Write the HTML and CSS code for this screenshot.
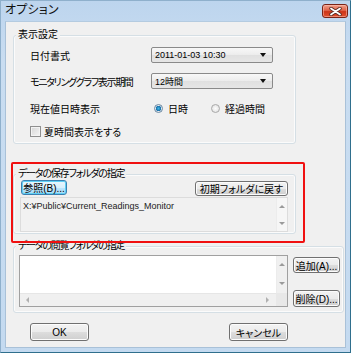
FILE: index.html
```html
<!DOCTYPE html>
<html lang="ja">
<head>
  <meta charset="UTF-8" />
  <title>オプション</title>
  <link rel="stylesheet" href="styles.css">
</head>
<body>

  <div class="window">
    <!-- Title bar -->
    <div class="titlebar">
      <span class="title">オプション</span>
      <span class="close-btn">
        <svg width="13" height="9" viewBox="0 0 13 9">
          <path d="M2 1.5 L11 7.5 M11 1.5 L2 7.5" stroke="#5a2a22" stroke-width="3.4" stroke-linecap="round"/>
          <path d="M2 1.5 L11 7.5 M11 1.5 L2 7.5" stroke="#fff" stroke-width="1.8" stroke-linecap="round"/>
        </svg>
      </span>
    </div>

    <div class="client">
      <!-- 表示設定 -->
      <div class="group display-group">
        <span class="group-title">表示設定</span>
        <div class="row">
          <span class="row-label">日付書式</span>
          <div class="combo"><span>2011-01-03 10:30</span><i class="combo-arrow"></i></div>
        </div>
        <div class="row row-2">
          <span class="row-label kana">モニタリンググラフ表示期間</span>
          <div class="combo"><span>12時間</span><i class="combo-arrow"></i></div>
        </div>
        <div class="row row-3">
          <span class="row-label">現在値日時表示</span>
          <label class="radio-option first"><i class="radio checked"></i>日時</label>
          <label class="radio-option"><i class="radio"></i>経過時間</label>
        </div>
        <div class="row row-4">
          <label class="check-option"><i class="checkbox"></i>夏時間表示をする</label>
        </div>
      </div>

      <!-- データの保存フォルダの指定 -->
      <div class="group save-group">
        <span class="group-title kana">データの保存フォルダの指定</span>
        <div class="save-buttons">
          <button class="btn focused">参照(B)...</button>
          <button class="btn reset-btn">初期フォルダに戻す</button>
        </div>
        <div class="path-box">
          <span class="path-text">X:¥Public¥Current_Readings_Monitor</span>
          <div class="vscroll">
            <i class="arrow up"></i>
            <i class="arrow down"></i>
          </div>
        </div>
      </div>

      <!-- データの閲覧フォルダの指定 -->
      <div class="group view-group">
        <span class="group-title kana">データの閲覧フォルダの指定</span>
        <div class="list-box">
          <div class="list-main">
            <div class="list-area"></div>
            <div class="vscroll">
              <i class="arrow up"></i>
              <i class="arrow down"></i>
            </div>
          </div>
          <div class="hscroll-row">
            <div class="hscroll">
              <i class="arrow left"></i>
              <i class="arrow right"></i>
            </div>
            <div class="corner"></div>
          </div>
        </div>
        <div class="side-buttons">
          <button class="btn side-btn">追加(A)...</button>
          <button class="btn side-btn">削除(D)...</button>
        </div>
      </div>

      <!-- OK / Cancel -->
      <div class="dialog-buttons">
        <button class="btn dialog-btn">OK</button>
        <button class="btn dialog-btn">キャンセル</button>
      </div>

      <!-- red highlight annotation -->
      <div class="highlight"></div>
    </div>
  </div>

</body>
</html>
```

FILE: styles.css
```css
* { margin: 0; padding: 0; box-sizing: border-box; }

body {
  background: #fff;
  font-family: "Liberation Sans", "Noto Sans CJK JP", sans-serif;
  font-size: 10px;
  font-feature-settings: "palt";
  color: #000;
}

.window {
  width: 351px;
  height: 353px;
  background: linear-gradient(#bdd5ee, #c9ddf1 60px, #c4daf0);
  border: 1px solid #8fb0cc;
  border-right-color: #2f6f8d;
  border-bottom-color: #2f6f8d;
  display: flex;
  flex-direction: column;
}

/* --- TITLE BAR --- */
.titlebar {
  height: 20px;
  display: flex;
  justify-content: space-between;
  align-items: flex-start;
  padding-left: 4px;
}

.title {
  font-size: 12px;
  line-height: 18px;
  color: #111;
  letter-spacing: 0.2px;
}

.close-btn {
  width: 26px;
  height: 14px;
  margin-top: 3px;
  margin-right: 2px;
  border: 1px solid #7a2418;
  border-radius: 3px;
  background: linear-gradient(#f0a08c, #e0644a 45%, #cc3519 55%, #e2502e);
  box-shadow: inset 0 0 0 1px rgba(255,200,185,0.5);
  display: flex;
  align-items: center;
  justify-content: center;
}

/* --- CLIENT AREA --- */
.client {
  position: relative;
  flex: 1;
  margin: 0 4px 4px 4px;
  background: #f0f0f0;
  border: 1px solid #a9c1d8;
  border-top-color: #b4cbe0;
}

.group {
  position: relative;
  margin-left: 7px;
  border: 1px solid #d5dfe5;
  border-radius: 3px;
  box-shadow: inset 0 0 0 1px #fbfbfb;
}

.group-title {
  position: absolute;
  top: -7px;
  left: 2px;
  padding: 0 2px;
  background: #f0f0f0;
  line-height: 12px;
  font-size: 10px;
  white-space: nowrap;
}

.kana {
  letter-spacing: -1.2px;
}

/* 表示設定 */
.display-group {
  margin-top: 13px;
  width: 283px;
  height: 109px;
  padding: 11px 0 0 16px;
}

.row {
  display: flex;
  align-items: center;
  height: 16px;
}

.row-2 { margin-top: 10px; }
.row-3 { margin-top: 11px; }
.row-4 { margin-top: 7px; }

.row-label {
  width: 121px;
  flex-shrink: 0;
  font-size: 10px;
  white-space: nowrap;
}

.row-label.kana {
  letter-spacing: -1.3px;
}

.combo {
  width: 122px;
  height: 16px;
  border: 1px solid #8a8a8a;
  border-radius: 2px;
  background: linear-gradient(#f8f8f8, #ececec 50%, #e0e0e0 51%, #e6e6e6);
  display: flex;
  align-items: center;
  justify-content: space-between;
  padding: 0 6px 0 3px;
  font-size: 9px;
}

.combo-arrow {
  width: 0;
  height: 0;
  border-left: 3.5px solid transparent;
  border-right: 3.5px solid transparent;
  border-top: 4px solid #111;
}

.radio-option {
  display: flex;
  align-items: center;
  gap: 5px;
  font-size: 10px;
  white-space: nowrap;
}

.radio-option.first {
  margin-left: 3px;
  width: 57px;
}

.radio {
  width: 9px;
  height: 9px;
  border-radius: 50%;
  border: 1px solid #a9a9a9;
  background: radial-gradient(#fdfdfd, #dcdcdc);
}

.radio.checked {
  border-color: #6d8aa3;
  background: radial-gradient(circle, #3ab7e8 0, #1a6ea8 2.5px, #e3eaf0 3px, #c9d3dc);
}

.check-option {
  display: flex;
  align-items: center;
  gap: 3px;
  font-size: 10px;
  white-space: nowrap;
}

.checkbox {
  width: 11px;
  height: 11px;
  border: 1px solid #8f8f8f;
  background: linear-gradient(135deg, #d6d6d6, #f5f5f5);
  box-shadow: inset 0 0 0 1px #f3f3f3;
}

/* --- BUTTONS --- */
.btn {
  font-family: "Liberation Sans", "Noto Sans CJK JP", sans-serif;
  font-size: 10px;
  font-feature-settings: "palt";
  color: #000;
  white-space: nowrap;
  border: 1px solid #707070;
  border-radius: 3px;
  background: linear-gradient(#f3f3f3, #ebebeb 50%, #dddddd 51%, #cfcfcf);
  box-shadow: inset 0 0 0 1px #fcfcfc;
  display: flex;
  align-items: center;
  justify-content: center;
  cursor: pointer;
}

.btn.focused {
  border-color: #3c7fb1;
  box-shadow: inset 0 0 0 1px #5fd0f5;
  background: linear-gradient(#eaf6fd, #d9f0fc 50%, #bee6fd 51%, #a7d9f5);
}

/* データの保存フォルダの指定 */
.save-group {
  margin-top: 30px;
  width: 283px;
  height: 60px;
  padding: 5px 7px 0 6px;
}

.save-buttons {
  display: flex;
  justify-content: space-between;
  align-items: flex-start;
  height: 17px;
}

.save-buttons .btn {
  height: 15px;
}

.save-buttons .focused {
  width: 46px;
  margin-left: 1px;
}

.reset-btn {
  width: 93px;
  margin-top: 1px;
}

.path-box {
  height: 35px;
  border: 1px solid #dcdcdc;
  background: #f1f1f1;
  display: flex;
  justify-content: space-between;
}

.path-text {
  font-size: 9px;
  padding: 3px 0 0 2px;
  color: #222;
}

.vscroll {
  width: 11px;
  background: #f6f6f6;
  border-left: 1px solid #ececec;
  display: flex;
  flex-direction: column;
  justify-content: space-between;
  align-items: center;
  padding: 7px 0 6px;
}

.arrow {
  width: 0;
  height: 0;
}

.arrow.up {
  border-left: 3px solid transparent;
  border-right: 3px solid transparent;
  border-bottom: 3px solid #9a9a9a;
}

.arrow.down {
  border-left: 3px solid transparent;
  border-right: 3px solid transparent;
  border-top: 3px solid #9a9a9a;
}

.arrow.left {
  border-top: 3px solid transparent;
  border-bottom: 3px solid transparent;
  border-right: 3px solid #b0b0b0;
}

.arrow.right {
  border-top: 3px solid transparent;
  border-bottom: 3px solid transparent;
  border-left: 3px solid #b0b0b0;
}

/* データの閲覧フォルダの指定 */
.view-group {
  margin-top: 12px;
  width: 331px;
  height: 67px;
  padding: 8px 0 0 5px;
  display: flex;
  gap: 5px;
}

.list-box {
  width: 269px;
  height: 52px;
  border: 1px solid #a0a0a0;
  background: #fff;
  display: flex;
  flex-direction: column;
}

.list-main {
  flex: 1;
  display: flex;
}

.list-area {
  flex: 1;
}

.list-main .vscroll {
  background: #f0f0f0;
  padding: 7px 0 8px;
}

.hscroll-row {
  height: 13px;
  display: flex;
}

.hscroll {
  flex: 1;
  background: #f0f0f0;
  border-top: 1px solid #e6e6e6;
  display: flex;
  align-items: center;
  justify-content: space-between;
  padding: 0 7px 0 6px;
}

.corner {
  width: 11px;
  background: #e8e8e8;
}

.side-buttons {
  display: flex;
  flex-direction: column;
  justify-content: space-between;
  padding-top: 2px;
  height: 52px;
}

.side-btn {
  width: 47px;
  height: 16px;
}

.side-btn:last-child {
  height: 17px;
}

/* OK / Cancel */
.dialog-buttons {
  display: flex;
  gap: 140px;
  margin-top: 10px;
  padding-left: 24px;
}

.dialog-btn {
  width: 59px;
  height: 18px;
}

/* red highlight annotation */
.highlight {
  position: absolute;
  left: 5px;
  top: 140px;
  width: 294px;
  height: 81px;
  border: 2px solid #f01010;
  border-radius: 2px;
  pointer-events: none;
}
```
